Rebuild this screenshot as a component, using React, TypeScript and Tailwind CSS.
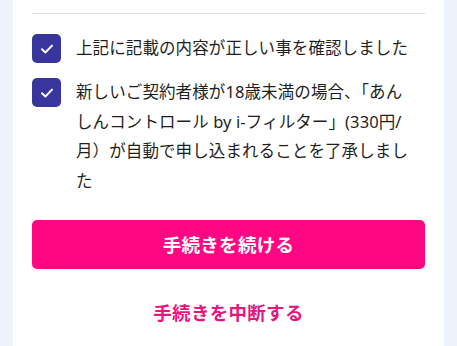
const Check = () => (
  <span className="mt-[1px] flex h-[29px] w-[29px] shrink-0 items-center justify-center rounded-[5px] bg-[#38359c]">
    <svg width="16" height="16" viewBox="0 0 16 16" fill="none">
      <path d="M3 8.3l3.4 3.2L13 4.6" stroke="white" strokeWidth="2" strokeLinecap="round" strokeLinejoin="round" />
    </svg>
  </span>
);

const App = () => {
  return (
    <div
      className="min-h-[346px] bg-[#eef2fb] px-[13px]"
      style={{ fontFamily: '"Noto Sans", "Noto Sans CJK JP", sans-serif' }}
    >
      <div className="min-h-[346px] bg-white px-[19px] pt-[13px]">
        <div className="h-px bg-[#d8dbe0]" />

        <div className="mt-[19px] flex flex-col gap-[14px] pr-[12px] text-[16.5px] leading-[29.5px] tracking-[0.1px] text-[#1f1f1f]">
          <label className="flex items-start gap-[15px]">
            <Check />
            <span>上記に記載の内容が正しい事を確認しました</span>
          </label>
          <label className="flex items-start gap-[15px]">
            <Check />
            <span>
              新しいご契約者様が18歳未満の場合、「あんしんコントロール by i-フィルター」(330円/月）が自動で申し込まれることを了承しました
            </span>
          </label>
        </div>

        <button className="mt-[25px] flex h-[49px] w-full items-center justify-center rounded-[5px] bg-[#ff0783] text-[18.5px] font-bold tracking-[0.3px] text-white">
          手続きを続ける
        </button>

        <div className="mt-[30px] text-center text-[18.5px] font-bold leading-[28px] tracking-[0.3px] text-[#e5177f]">
          手続きを中断する
        </div>
      </div>
    </div>
  );
};

export default App;
